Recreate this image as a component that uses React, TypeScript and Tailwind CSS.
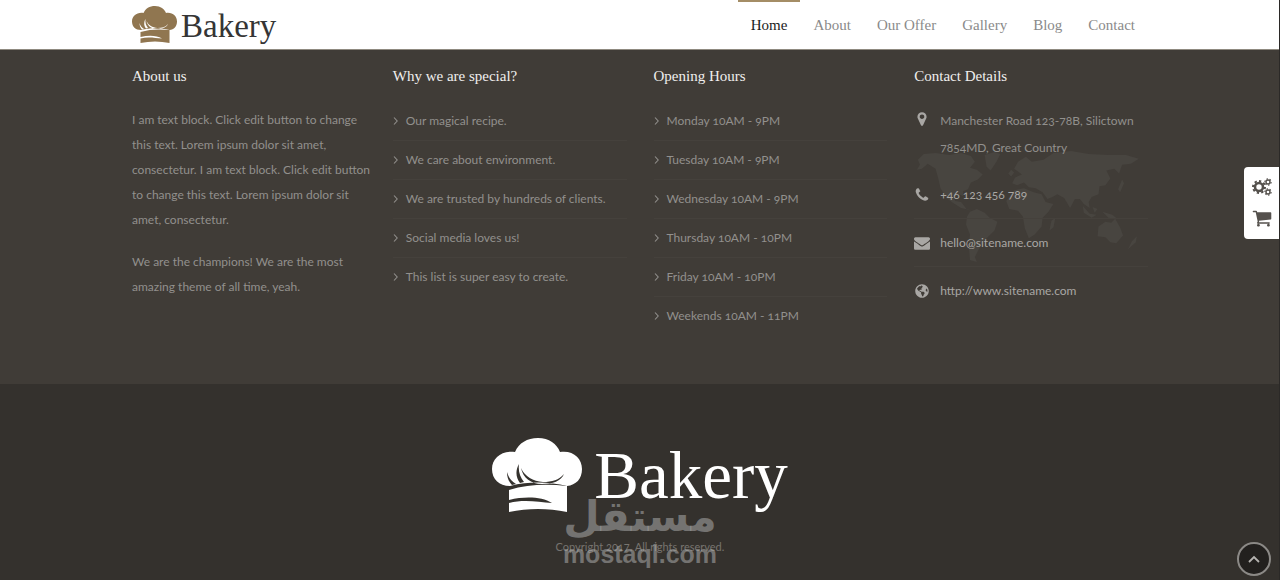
import { useState } from "react";
import { FaGlobeAmericas } from "react-icons/fa";

const navItems = ["Home", "About", "Our Offer", "Gallery", "Blog", "Contact"];

const reasons = [
  "Our magical recipe.",
  "We care about environment.",
  "We are trusted by hundreds of clients.",
  "Social media loves us!",
  "This list is super easy to create.",
];

const hours = [
  "Monday 10AM - 9PM",
  "Tuesday 10AM - 9PM",
  "Wednesday 10AM - 9PM",
  "Thursday 10AM - 10PM",
  "Friday 10AM - 10PM",
  "Weekends 10AM - 11PM",
];

function ChefHat({ className }: { className: string }) {
  return (
    <svg viewBox="0 0 90 74" className={className} fill="currentColor" fillRule="evenodd" aria-hidden="true">
      <path d="M18 48C7 48 0 41 0 31C0 20 10 12 23 14C27 5 35 0 46 0C57 0 65 6 68 14C81 12 90 20 90 31C90 41 84 47 75 48C58 44 38 43 18 48ZM15 34C15 40 17 44 20 47L24 46C19 43 17 40 15 34ZM27 26C23 33 24 40 28 45L32 44C28 39 26 33 27 26ZM29 30C31 40 39 46 50 46C61 46 69 43 72 36C67 42 60 44 51 44C41 43 33 39 29 30Z" />
      <path d="M17 52C36 46 56 46 75 48V74C56 70 36 70 17 74V65C32 61 46 64 60 65C50 59 34 58 17 62Z" />
    </svg>
  );
}

function MarkerIcon() {
  return (
    <svg viewBox="0 0 1792 1792" className="size-4" fill="currentColor" aria-hidden="true">
      <path d="M1152 640q0-106-75-181t-181-75-181 75-75 181 75 181 181 75 181-75 75-181zm256 0q0 109-33 179l-364 774q-16 33-47.5 52t-67.5 19-67.5-19-46.5-52l-365-774q-33-70-33-179 0-212 150-362t362-150 362 150 150 362z" />
    </svg>
  );
}

function PhoneIcon() {
  return (
    <svg viewBox="0 0 1792 1792" className="size-4" fill="currentColor" aria-hidden="true">
      <path d="M1600 1240q0 27-10 70.5t-21 68.5q-21 50-122 106-94 51-186 51-27 0-53-3.5t-57.5-12.5-47-14.5-55.5-20.5-49-18q-98-35-175-83-127-79-264-216t-216-264q-48-77-83-175-3-9-18-49t-20.5-55.5-14.5-47-12.5-57.5-3.5-53q0-92 51-186 56-101 106-122 25-11 68.5-21t70.5-10q14 0 21 3 18 6 53 76 11 19 30 54t35 63.5 31 53.5q3 4 17.5 25t21.5 35.5 7 28.5q0 20-28.5 50t-62 55-62 53-28.5 46q0 9 5 22.5t8.5 20.5 14 24 11.5 19q76 137 174 235t235 174q2 1 19 11.5t24 14 20.5 8.5 22.5 5q18 0 46-28.5t53-62 55-62 50-28.5q14 0 28.5 7t35.5 21.5 25 17.5q25 15 53.5 31t63.5 35 54 30q70 35 76 53 3 7 3 21z" />
    </svg>
  );
}

function MailIcon() {
  return (
    <svg viewBox="0 0 1792 1792" className="size-4" fill="currentColor" aria-hidden="true">
      <path d="M1792 710v794q0 66-47 113t-113 47h-1472q-66 0-113-47t-47-113v-794q44 49 101 87 362 246 497 345 57 42 92.5 65.5t94.5 48 110 24.5h2q51 0 110-24.5t94.5-48 92.5-65.5q170-123 498-345 57-39 100-87zm0-294q0 79-49 151t-122 123q-376 261-468 325-10 7-42.5 31t-54 38.5-52 32.5-57.5 27-50 9h-2q-23 0-50-9t-57.5-27-52-32.5-54-38.5-42.5-31q-91-64-262-182.5t-205-142.5q-62-42-117-115.5t-55-136.5q0-78 41.5-130t118.5-52h1472q65 0 112.5 47t47.5 113z" />
    </svg>
  );
}

function GearsIcon() {
  return (
    <svg viewBox="0 0 20 18" className="h-[18px] w-5" fill="none" stroke="currentColor" aria-hidden="true">
      <circle cx="7" cy="9" r="4" strokeWidth="2.6" />
      <circle cx="7" cy="9" r="6" strokeWidth="2" pathLength="16" strokeDasharray="1 1" />
      <circle cx="16" cy="4" r="2" strokeWidth="1.4" />
      <circle cx="16" cy="4" r="3.1" strokeWidth="1.2" pathLength="12" strokeDasharray="1 1" />
      <circle cx="16" cy="14" r="2" strokeWidth="1.4" />
      <circle cx="16" cy="14" r="3.1" strokeWidth="1.2" pathLength="12" strokeDasharray="1 1" />
    </svg>
  );
}

function CartIcon() {
  return (
    <svg viewBox="0 0 1792 1792" className="size-5" fill="currentColor" aria-hidden="true">
      <path d="M704 1536q0 52-38 90t-90 38-90-38-38-90 38-90 90-38 90 38 38 90zm896 0q0 52-38 90t-90 38-90-38-38-90 38-90 90-38 90 38 38 90zm128-1088v512q0 24-16.5 42.5t-40.5 21.5l-1044 122q13 60 13 70 0 16-24 64h920q26 0 45 19t19 45-19 45-45 19h-1024q-26 0-45-19t-19-45q0-11 8-31.5t16-36 21.5-40 15.5-29.5l-177-823h-204q-26 0-45-19t-19-45 19-45 45-19h256q16 0 28.5 6.5t19.5 15.5 13 24.5 8 26 5.5 29.5 4.5 26h1201q26 0 45 19t19 45z" />
    </svg>
  );
}

function WorldMap() {
  return (
    <svg
      viewBox="0 0 230 118"
      className="absolute left-0 top-[84px] w-full pr-2 text-[#484540]"
      fill="currentColor"
      aria-hidden="true"
    >
      {/* Americas and Greenland */}
      <path d="M4 10L10 4L22 3L36 5L48 3L58 6L62 12L57 18L64 20L70 25L65 30L58 33L55 40L50 42L50 47L44 44L39 47L42 52L48 53L54 61L60 62L48 59L40 54L33 49L27 39L25 30L22 19L14 14L8 19L3 20L6 15Z" />
      <path d="M72 5L82 2L88 4L84 12L78 21L74 17Z" />
      <path d="M57 63L64 60L72 64L77 69L85 73L82 82L76 88L70 94L66 101L62 109L64 114L57 112L56 99L57 86L53 76L54 68Z" />
      {/* Europe, Asia and Africa */}
      <path d="M102 19L106 12L114 7L120 12L132 10L142 3L160 1L178 4L198 5L216 5L229 9L221 14L212 15L209 24L204 19L196 21L200 29L195 36L189 37L188 45L181 48L178 53L179 59L173 55L169 50L164 50L159 59L153 49L146 45L141 48L136 50L131 43L124 39L117 38L112 33L105 36L100 34L103 28L110 25L106 22Z" />
      <path d="M102 41L112 39L122 43L130 45L134 53L142 55L137 63L131 69L130 78L123 86L117 90L113 80L111 68L106 62L97 60L94 52Z" />
      {/* Oceania */}
      <path d="M140 72L144 69L142 79L138 82Z" />
      <path d="M188 78L195 73L201 74L205 70L210 79L213 87L206 95L200 94L195 89L187 88Z" />
      <path d="M172 57L179 65L186 66L181 69L173 64ZM182 58L187 60L184 64ZM192 63L202 66L207 70L198 69ZM208 40L212 30L214 34L210 43ZM222 93L227 88L226 94L218 101ZM99 20L102 23L99 27L96 24Z" />
    </svg>
  );
}

function Heading({ children }: { children: string }) {
  return <h2 className="font-['Liberation_Serif',serif] text-[15px] leading-5 text-[#f0efee]">{children}</h2>;
}

function ArrowList({ items }: { items: string[] }) {
  return (
    <ul className="mt-4">
      {items.map((item) => (
        <li key={item} className="flex h-[39px] items-center gap-2 border-b border-[#45413c] last:border-transparent">
          <svg viewBox="0 0 5 8" className="h-2 w-[5px]" fill="none" stroke="currentColor" aria-hidden="true">
            <path d="M1 0.5L4.2 4L1 7.5" strokeWidth="1.1" />
          </svg>
          {item}
        </li>
      ))}
    </ul>
  );
}

export default function App() {
  const [active, setActive] = useState("Home");

  return (
    <div className="relative h-screen overflow-hidden bg-[#34312d] font-['Lato',sans-serif] text-[12px] oldstyle-nums text-[#92908d]">
      <header className="border-b border-[#8f8a80] bg-white">
        <div className="mx-auto flex h-[49px] max-w-[1016px] items-start justify-between">
          <a href="#home" className="flex h-full items-center gap-1 text-[#907650]">
            <ChefHat className="h-[37px] w-[45px]" />
            <span className="pt-1 font-['Liberation_Serif',serif] text-[33px] leading-none text-[#353535]">Bakery</span>
          </a>
          <nav className="flex h-full font-['Liberation_Serif',serif] text-[15px]">
            {navItems.map((item) => (
              <a
                key={item}
                href="#home"
                onClick={() => setActive(item)}
                className={`flex items-center border-t-2 px-[13px] ${
                  active === item ? "border-[#a48d66] text-[#1c1c1c]" : "border-transparent text-[#8a8a8a]"
                }`}
              >
                {item}
              </a>
            ))}
          </nav>
        </div>
      </header>

      <section className="bg-[#403c37]">
        <div className="mx-auto grid min-h-[334px] max-w-[1016px] grid-cols-4 gap-x-[27px] pt-4">
          <div>
            <Heading>About us</Heading>
            <p className="mt-[21px] leading-[25px] whitespace-nowrap">
              I am text block. Click edit button to change
              <br />
              this text. Lorem ipsum dolor sit amet,
              <br />
              consectetur. I am text block. Click edit button
              <br />
              to change this text. Lorem ipsum dolor sit
              <br />
              amet, consectetur.
            </p>
            <p className="mt-[17px] leading-[25px]">
              We are the champions! We are the most amazing theme of all time, yeah.
            </p>
          </div>

          <div>
            <Heading>Why we are special?</Heading>
            <ArrowList items={reasons} />
          </div>

          <div>
            <Heading>Opening Hours</Heading>
            <ArrowList items={hours} />
          </div>

          <div className="relative">
            <WorldMap />
            <div className="relative">
              <Heading>Contact Details</Heading>
              <ul className="mt-[21px] text-[#a9a7a4]">
                <li className="flex gap-[10px] pb-[10px] leading-[27px] text-[#92908d]">
                  <span className="pt-1 text-[#a9a7a4]">
                    <MarkerIcon />
                  </span>
                  <address className="not-italic">
                    Manchester Road 123-78B, Silictown
                    <br />
                    7854MD, Great Country
                  </address>
                </li>
                <li className="flex h-12 items-center gap-[10px] border-b border-[#45413c]">
                  <PhoneIcon />
                  <a href="tel:+46123456789">+46 123 456 789</a>
                </li>
                <li className="flex h-12 items-center gap-[10px] border-b border-[#45413c]">
                  <MailIcon />
                  <a href="mailto:hello@sitename.com">hello@sitename.com</a>
                </li>
                <li className="flex h-12 items-center gap-[10px]">
                  <FaGlobeAmericas size={14} className="w-4" />
                  <a href="http://www.sitename.com">http://www.sitename.com</a>
                </li>
              </ul>
            </div>
          </div>
        </div>
      </section>

      <footer className="relative flex flex-col items-center pt-[53px]">
        <div className="flex items-center gap-3 text-white">
          <ChefHat className="h-[76px] w-[90px]" />
          <span className="font-['Liberation_Serif',serif] text-[67px] leading-[76px]">Bakery</span>
        </div>
        <p className="mt-6 text-[11px] leading-5 text-[#77746f]">Copyright 2017. All rights reserved.</p>
        <div className="absolute top-[110px] flex flex-col items-center font-bold text-[#b5b5b5]/50">
          <span lang="ar" dir="rtl" className="font-['DejaVu_Sans',sans-serif] text-[42px] leading-[46px]">
            مستقل
          </span>
          <span className="font-['Liberation_Sans',sans-serif] text-[25px] leading-7">mostaql.com</span>
        </div>
      </footer>

      <div className="absolute top-0 right-0 h-full w-px bg-[#2b2927]" />
      <div className="absolute right-px top-[167px] flex h-[72px] w-[35px] flex-col items-center justify-center gap-3 rounded-l bg-white text-[#55514d]">
        <button type="button" aria-label="Settings">
          <GearsIcon />
        </button>
        <button type="button" aria-label="Cart">
          <CartIcon />
        </button>
      </div>
      <button
        type="button"
        aria-label="Back to top"
        className="absolute bottom-1 right-[9px] flex size-[34px] items-center justify-center rounded-full border-2 border-[#8b8986] bg-[#22201e] text-[#b5b3b0]"
      >
        <svg viewBox="0 0 12 8" className="h-2 w-3" fill="none" stroke="currentColor" aria-hidden="true">
          <path d="M1 7L6 2L11 7" strokeWidth="1.8" />
        </svg>
      </button>
    </div>
  );
}
